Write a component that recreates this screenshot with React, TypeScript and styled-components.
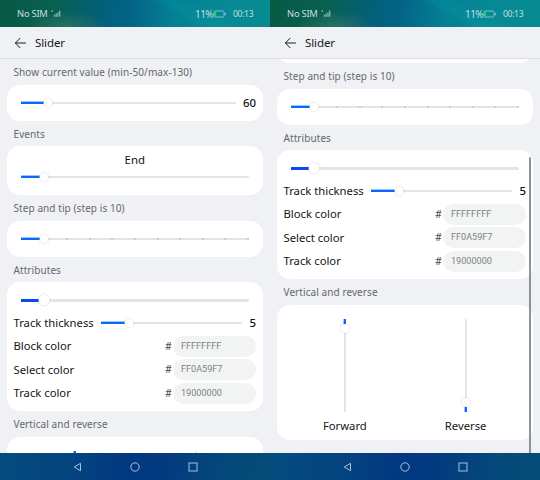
import React from 'react';
import styled, { createGlobalStyle, css } from 'styled-components';

const GlobalStyle = createGlobalStyle`
  * { box-sizing: border-box; }
  body { margin: 0; background: #eff1f4; font-family: "Noto Sans", Roboto, sans-serif; }
`;

const Screens = styled.div`
  display: flex;
  width: 540px;
  height: 480px;
  overflow: hidden;
`;

const Phone = styled.section`
  position: relative;
  display: flex;
  flex-direction: column;
  width: 270px;
  height: 480px;
  background: #eff1f4;
`;

const StatusBar = styled.div`
  display: flex;
  align-items: center;
  flex: 0 0 27px;
  padding: 0 16px 0 17px;
  color: #c2dee2;
  line-height: 27px;
  background:
    radial-gradient(ellipse 40px 16px at 66px 27px, rgba(52, 118, 108, 0.75), transparent),
    linear-gradient(28deg, transparent 62%, rgba(0, 170, 176, 0.2) 66%, transparent 76%),
    linear-gradient(100deg, #075a43 0%, #08604f 20%, #04607a 38%, #036486 48%, #057f94 64%, #078a95 82%, #078b91 100%);

  svg { flex: none; }
`;

const Carrier = styled.span`
  width: 32px;
  font-size: 9.4px;
  letter-spacing: -0.25px;
  line-height: 14px;
  white-space: nowrap;
`;

const SignalIcon = styled.svg`
  margin: 0 auto 0 2px;
`;

const Percent = styled.span`
  font-size: 10px;
  letter-spacing: -0.6px;
  line-height: 14px;
`;

const Clock = styled.span`
  width: 21px;
  margin-left: 7px;
  font-size: 8.6px;
  letter-spacing: -0.35px;
  line-height: 14px;
  white-space: nowrap;
`;

const Header = styled.header`
  display: flex;
  align-items: center;
  gap: 8px;
  flex: 0 0 32px;
  padding: 0 14px;
  border-bottom: 1px solid #dcdee1;
`;

const Title = styled.h1`
  margin: 0;
  color: #17181a;
  font-size: 11.5px;
  font-weight: 400;
  letter-spacing: -0.1px;
  line-height: 30px;
`;

const Viewport = styled.main`
  flex: 0 0 394px;
  overflow: hidden;
`;

const Content = styled.div<{ $scroll: number }>`
  margin-top: ${(p) => -p.$scroll}px;
  padding: 0 7px;
`;

const SectionLabel = styled.h2`
  height: 25.6px;
  margin: 0;
  padding-left: 6.5px;
  color: #66686b;
  font-size: 10px;
  font-weight: 400;
  letter-spacing: 0.08px;
  line-height: 26px;
  white-space: nowrap;
`;

const Card = styled.div<{ $height: number }>`
  display: flex;
  flex-direction: column;
  height: ${(p) => p.$height}px;
  padding: 0 7px 0 6.5px;
  border-radius: 13px;
  background: #fff;
`;

const Row = styled.div<{ $height: number; $gap?: number }>`
  display: flex;
  align-items: center;
  flex: 0 0 ${(p) => p.$height}px;
  height: ${(p) => p.$height}px;
  margin-bottom: ${(p) => p.$gap ?? 0}px;
`;

const SliderBox = styled.div<{ $start: number; $end: number }>`
  flex: 1;
  margin: 0 ${(p) => p.$end}px 0 ${(p) => p.$start}px;
`;

const Track = styled.div<{ $size: number }>`
  position: relative;
  display: flex;
  align-items: center;
  justify-content: space-between;
  height: ${(p) => p.$size}px;
  border-radius: 2px;
  background: #e2e4e5;
`;

const Fill = styled.span<{ $width: number; $color: string; $soft: boolean }>`
  position: absolute;
  inset: 0 auto 0 0;
  width: ${(p) => p.$width}px;
  background: ${(p) => p.$color};
  box-shadow: ${(p) => (p.$soft ? '0 -1px 0 rgba(10, 104, 247, 0.4)' : 'none')};
`;

const Tick = styled.i`
  width: 2px;
  height: 2px;
  border-radius: 50%;
  background: #c5c8ca;
`;

const thumb = css<{ $size: number }>`
  position: absolute;
  width: ${(p) => p.$size}px;
  height: ${(p) => p.$size}px;
  border-radius: 50%;
  background: #fff;
  box-shadow: 0 0 1.5px rgba(0, 0, 0, 0.24);
`;

const Thumb = styled.span<{ $size: number; $at: number }>`
  ${thumb}
  top: 50%;
  left: ${(p) => p.$at}px;
  transform: translate(-50%, -50%);
`;

const Value = styled.span<{ $width: number }>`
  width: ${(p) => p.$width}px;
  color: #111;
  font-size: 11.4px;
  font-weight: 500;
  line-height: 16px;
`;

const EventName = styled.div`
  height: 27px;
  color: #111;
  font-size: 11.4px;
  line-height: 27px;
  text-align: center;
`;

const Field = styled.span<{ $width?: number }>`
  width: ${(p) => (p.$width ? `${p.$width}px` : 'auto')};
  color: #141414;
  font-size: 11.25px;
  line-height: 16px;
  white-space: nowrap;
`;

const Hash = styled.span`
  margin-left: auto;
  margin-right: 1px;
  color: #4c4e50;
  font-family: Roboto, sans-serif;
  font-size: 11px;
`;

const Pill = styled.span`
  width: 83.5px;
  height: 21px;
  padding-left: 8.5px;
  border-radius: 10.5px;
  background: #f2f4f4;
  color: #7c8087;
  font-family: Roboto, sans-serif;
  font-size: 9.1px;
  line-height: 21px;
`;

const Columns = styled.div`
  display: grid;
  grid-template-columns: 1fr 1fr;
  padding: 14px 0 0 1px;
`;

const Column = styled.div`
  display: flex;
  flex-direction: column;
  align-items: center;
  gap: 6.6px;
`;

const VerticalTrack = styled.div`
  position: relative;
  width: 2px;
  height: 93px;
  border-radius: 1px;
  background: #e2e4e5;
`;

const VerticalFill = styled.span<{ $reverse: boolean }>`
  position: absolute;
  left: 0;
  ${(p) => (p.$reverse ? 'bottom: 0;' : 'top: 0;')}
  width: 2px;
  height: 9px;
  background: #0a68f7;
  box-shadow: -1px 0 0 rgba(10, 104, 247, 0.4);
`;

const VerticalThumb = styled.span<{ $size: number; $reverse: boolean }>`
  ${thumb}
  left: 50%;
  ${(p) => (p.$reverse ? 'bottom: 5px;' : 'top: 5px;')}
  transform: translateX(-50%);
`;

const NavBar = styled.nav`
  display: flex;
  align-items: center;
  justify-content: space-between;
  flex: 0 0 27px;
  padding: 0 72px 0 73px;
  background: linear-gradient(100deg, #044c7e 0%, #044480 26%, #023880 48%, #033b80 62%, #044a7a 84%, #044c76 100%);
`;

const ScrollThumb = styled.div`
  position: absolute;
  top: 157px;
  left: 259px;
  width: 2px;
  height: 296px;
  border-radius: 1px 1px 0 0;
  background: #8c9299;
`;

interface SliderProps {
  at: number;
  start?: number;
  end?: number;
  size?: number;
  thumbSize?: number;
  color?: string;
  steps?: number;
}

function Slider({ at, start = 7.5, end = 7, size = 2, thumbSize = 9, color = '#0a68f7', steps = 0 }: SliderProps) {
  return (
    <SliderBox $start={start} $end={end}>
      <Track $size={size}>
        {Array.from({ length: steps }, (_, i) => <Tick key={i} />)}
        <Fill $width={at} $color={color} $soft={size === 2} />
        <Thumb $size={thumbSize} $at={at} />
      </Track>
    </SliderBox>
  );
}

function VerticalSlider({ label, reverse = false }: { label: string; reverse?: boolean }) {
  return (
    <Column>
      <VerticalTrack>
        <VerticalFill $reverse={reverse} />
        <VerticalThumb $size={9} $reverse={reverse} />
      </VerticalTrack>
      <Field>{label}</Field>
    </Column>
  );
}

const colors = [
  ['Block color', 'FFFFFFFF'],
  ['Select color', 'FF0A59F7'],
  ['Track color', '19000000'],
];

function Settings({ scroll }: { scroll: number }) {
  return (
    <Content $scroll={scroll}>
      <SectionLabel>Show current value (min-50/max-130)</SectionLabel>
      <Card $height={36}>
        <Row $height={36}>
          <Slider at={27} end={7.5} />
          <Value $width={13}>60</Value>
        </Row>
      </Card>
      <SectionLabel>Events</SectionLabel>
      <Card $height={49}>
        <EventName>End</EventName>
        <Row $height={8}><Slider at={23} /></Row>
      </Card>
      <SectionLabel>Step and tip (step is 10)</SectionLabel>
      <Card $height={36}>
        <Row $height={36}><Slider at={23} steps={11} /></Row>
      </Card>
      <SectionLabel>Attributes</SectionLabel>
      <Card $height={128.8}>
        <Row $height={36}><Slider at={23} size={3} thumbSize={11} color="#0a48f0" /></Row>
        <Row $height={9} $gap={7}>
          <Field $width={80.5}>Track thickness</Field>
          <Slider at={28} start={7} end={8} />
          <Value $width={6.5}>5</Value>
        </Row>
        {colors.map(([name, value]) => (
          <Row key={name} $height={23.6}>
            <Field>{name}</Field>
            <Hash>#</Hash>
            <Pill>{value}</Pill>
          </Row>
        ))}
      </Card>
      <SectionLabel>Vertical and reverse</SectionLabel>
      <Card $height={135}>
        <Columns>
          <VerticalSlider label="Forward" />
          <VerticalSlider label="Reverse" reverse />
        </Columns>
      </Card>
    </Content>
  );
}

function Device({ scroll, scrollbar = false }: { scroll: number; scrollbar?: boolean }) {
  return (
    <Phone>
      <StatusBar>
        <Carrier>No SIM</Carrier>
        <SignalIcon width="10" height="7" viewBox="0 0 10 7" fill="#a9cdcd">
          <circle cx="1.2" cy="1" r=".8" />
          <path d="M2.8 4.8h1.3v2H2.8zM4.6 3.6h1.3v3.2H4.6zM6.4 2.2h1.2v4.6H6.4zM8.1.6h1.3v6.2H8.1z" opacity=".75" />
        </SignalIcon>
        <Percent>11%</Percent>
        <svg width="13" height="8" viewBox="0 0 13 8">
          <rect x="1" y="1" width="10" height="6" rx="1.5" fill="none" stroke="#8accd2" strokeWidth=".9" />
          <path d="M1.2 1.5h1.9v5H1.2z" fill="#22d35c" />
          <path d="M12.2 2.7v2.6" stroke="#8accd2" />
        </svg>
        <Clock>00:13</Clock>
      </StatusBar>
      <Header>
        <svg width="13" height="12" viewBox="0 0 13 12" fill="none" stroke="#1b1c1e" strokeWidth="1">
          <path d="M11.5 6H1.5M6 1.3 1.4 6 6 10.7" strokeLinecap="round" strokeLinejoin="round" />
        </svg>
        <Title>Slider</Title>
      </Header>
      <Viewport>
        <Settings scroll={scroll} />
      </Viewport>
      {scrollbar && <ScrollThumb />}
      <NavBar>
        <svg width="9" height="10" viewBox="0 0 9 10" fill="none" stroke="#a9c2dc">
          <path d="M7.5 1.3v7.4L1.3 5z" strokeLinejoin="round" />
        </svg>
        <svg width="10" height="10" viewBox="0 0 10 10" fill="none" stroke="#a9c2dc">
          <circle cx="5" cy="5" r="4.2" />
        </svg>
        <svg width="10" height="10" viewBox="0 0 10 10" fill="none" stroke="#a9c2dc">
          <rect x="1" y="1" width="8" height="8" />
        </svg>
      </NavBar>
    </Phone>
  );
}

export default function App() {
  return (
    <>
      <GlobalStyle />
      <Screens>
        <Device scroll={0} />
        <Device scroll={132} scrollbar />
      </Screens>
    </>
  );
}
